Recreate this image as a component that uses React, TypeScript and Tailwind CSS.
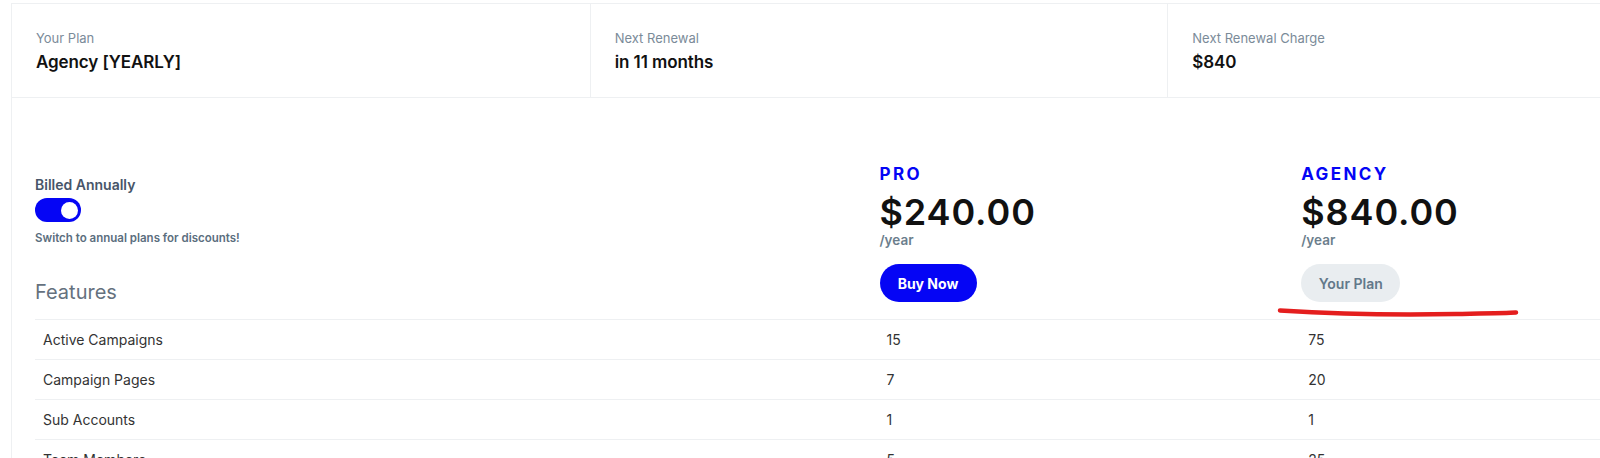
import React from "react";

const stats = [
  { label: "Your Plan", value: "Agency [YEARLY]" },
  { label: "Next Renewal", value: "in 11 months" },
  { label: "Next Renewal Charge", value: "$840" },
];

const plans = [
  { name: "PRO", price: "$240.00", current: false },
  { name: "AGENCY", price: "$840.00", current: true },
];

const features = [
  { name: "Active Campaigns", pro: "15", agency: "75" },
  { name: "Campaign Pages", pro: "7", agency: "20" },
  { name: "Sub Accounts", pro: "1", agency: "1" },
  { name: "Team Members", pro: "5", agency: "25" },
  { name: "Custom Domains", pro: "3", agency: "10" },
];

const App = () => {
  return (
    <div className="w-[1600px] h-[458px] overflow-hidden bg-white font-['Inter',sans-serif] text-[#111]">
      <div className="relative ml-[11px] mt-[3px] w-[1734px] border-l border-t border-[#eef0f2]">
        {/* subscription summary */}
        <div className="grid grid-cols-3 border-b border-[#eef0f2]">
          {stats.map((s, i) => (
            <div
              key={s.label}
              className={`h-[93px] pl-[24px] pt-[25px] ${i > 0 ? "border-l border-[#eef0f2]" : ""}`}
            >
              <div className="text-[13px] leading-[18px] text-[#7b8b99]">{s.label}</div>
              <div className="mt-[3px] text-[17px] leading-[24px] font-semibold tracking-[-0.005em]">
                {s.value}
              </div>
            </div>
          ))}
        </div>

        {/* plans header */}
        <div className="px-[23px]">
          <div className="grid grid-cols-[2fr_1fr_1fr] items-start pt-[64px] pb-[13px]">
            <div className="pt-[13px]">
              <div className="text-[14px] leading-[20px] font-semibold text-[#475569]">
                Billed Annually
              </div>
              <div className="mt-[3px] relative w-[46px] h-[24px] rounded-full bg-[#0505f5]">
                <span className="absolute right-[3px] top-[3.5px] w-[17px] h-[17px] rounded-full bg-white" />
              </div>
              <div className="mt-[8px] text-[11.5px] leading-[16px] font-semibold text-[#5b6e7e]">
                Switch to annual plans for discounts!
              </div>
              <div className="mt-[32px] text-[20px] leading-[28px] text-[#65717e]">Features</div>
            </div>
            {plans.map((p) => (
              <div key={p.name} className="pl-[1px]">
                <div className="text-[17px] leading-[24px] font-bold tracking-[0.14em] text-[#0505f5]">
                  {p.name}
                </div>
                <div className="mt-[6px] text-[36px] leading-[40px] font-semibold tracking-[0.025em]">
                  {p.price}
                </div>
                <div className="text-[13.5px] leading-[16px] font-semibold text-[#6b7e8c]">/year</div>
                {p.current ? (
                  <div className="mt-[16px] w-[99px] h-[38px] rounded-full bg-[#e9edf0] flex items-center justify-center text-[14px] font-semibold text-[#62788a]">
                    Your Plan
                  </div>
                ) : (
                  <button className="mt-[16px] w-[97px] h-[38px] rounded-full bg-[#0505f5] flex items-center justify-center text-[14px] font-bold text-white">
                    Buy Now
                  </button>
                )}
              </div>
            ))}
          </div>

          {/* features table */}
          <div className="border-t border-[#eef0f2]">
            {features.map((f) => (
              <div
                key={f.name}
                className="grid grid-cols-[2fr_1fr_1fr] h-[40px] items-center border-b border-[#eef0f2] text-[14px] text-[#333]"
              >
                <div className="px-[8px]">{f.name}</div>
                <div className="px-[8px]">{f.pro}</div>
                <div className="px-[8px]">{f.agency}</div>
              </div>
            ))}
          </div>
        </div>

        {/* red annotation stroke */}
        <svg
          className="absolute left-[1264px] top-[301px] pointer-events-none"
          width="246"
          height="14"
          viewBox="0 0 246 14"
        >
          <path
            d="M4 5.5 C 60 9, 130 10, 180 9 S 232 8, 240 7.5"
            fill="none"
            stroke="#e41e1e"
            strokeWidth="4.5"
            strokeLinecap="round"
          />
        </svg>
      </div>
    </div>
  );
};

export default App;
